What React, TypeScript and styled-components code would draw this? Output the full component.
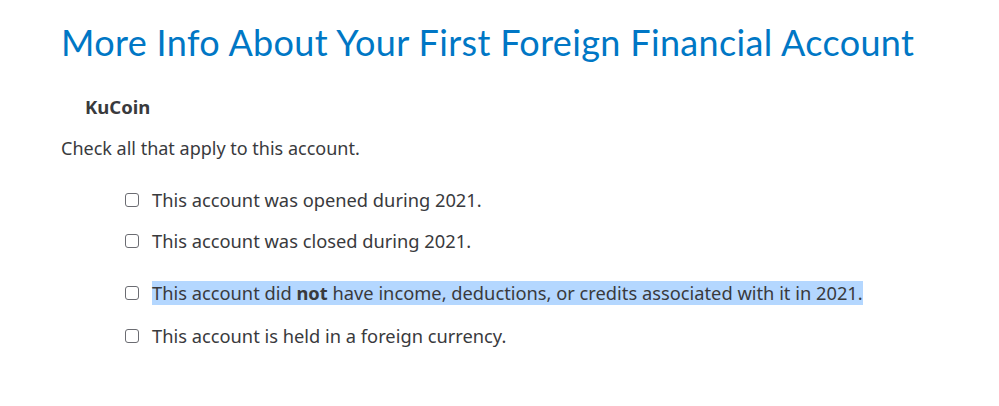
import React from 'react';
import styled, { createGlobalStyle } from 'styled-components';

const GlobalStyle = createGlobalStyle`
  body {
    margin: 0;
    background: #ffffff;
    font-family: 'Noto Sans', 'Lato', sans-serif;
    color: #393a3d;
  }
`;

const Page = styled.div`
  padding: 20px 0 0 61px;
`;

const Title = styled.h1`
  margin: 0;
  font-family: 'Lato', sans-serif;
  font-size: 36px;
  line-height: 44px;
  font-weight: 400;
  letter-spacing: 0.35px;
  color: #0077c5;
`;

const AccountName = styled.div`
  margin: 31px 0 0 24px;
  font-size: 18.5px;
  line-height: 24px;
  font-weight: 700;
  color: #393a3d;
`;

const Prompt = styled.p`
  margin: 17px 0 0 0;
  font-size: 18px;
  line-height: 24px;
`;

const OptionList = styled.div`
  display: flex;
  flex-direction: column;
  margin: 28px 0 0 64px;
`;

interface OptionRowProps {
  gapAfter: number;
}

const OptionRow = styled.label<OptionRowProps>`
  display: flex;
  align-items: center;
  gap: 13px;
  font-size: 18.3px;
  line-height: 24px;
  margin-bottom: ${({ gapAfter }) => gapAfter}px;
`;

const Box = styled.span`
  width: 14px;
  height: 14px;
  border: 1px solid #6b6c72;
  border-radius: 3px;
  box-sizing: border-box;
  flex-shrink: 0;
`;

const Selected = styled.span`
  background: #b4d7ff;
`;

const options = [
  { text: 'This account was opened during 2021.', gap: 17 },
  { text: 'This account was closed during 2021.', gap: 28 },
  { text: null, gap: 19 },
  { text: 'This account is held in a foreign currency.', gap: 0 },
];

export default function App() {
  return (
    <Page>
      <GlobalStyle />
      <Title>More Info About Your First Foreign Financial Account</Title>
      <AccountName>KuCoin</AccountName>
      <Prompt>Check all that apply to this account.</Prompt>
      <OptionList>
        {options.map((o, i) => (
          <OptionRow key={i} gapAfter={o.gap}>
            <Box />
            {o.text ?? (
              <Selected>
                This account did <b>not</b> have income, deductions, or credits associated with it in 2021.
              </Selected>
            )}
          </OptionRow>
        ))}
      </OptionList>
    </Page>
  );
}
